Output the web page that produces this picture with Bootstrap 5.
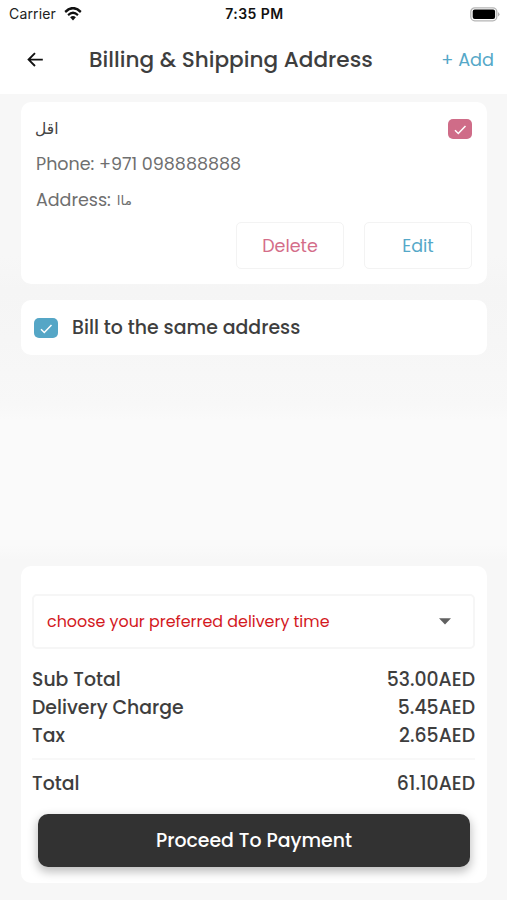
<!DOCTYPE html>
<html lang="en">
<head>
<meta charset="utf-8">
<meta name="viewport" content="width=device-width, initial-scale=1">
<title>Billing &amp; Shipping Address</title>
<link href="https://cdn.jsdelivr.net/npm/bootstrap@5.3.0/dist/css/bootstrap.min.css" rel="stylesheet">
<style>
  body{font-family:Poppins,Inter,"DejaVu Sans",sans-serif;color:#3e3e3e;overflow:hidden}
  .screen{height:900px;background:linear-gradient(#f7f7f7 0,#f7f7f7 255px,#f5f5f5 290px,#f6f6f6 340px,#f8f8f8 405px,#fafafa 420px,#fafafa 545px,#f7f7f7 560px,#f7f7f7 900px)}
  .status-bar{height:26px;padding:1px 7px 0 9px;font-family:Inter,"Liberation Sans",sans-serif;font-size:14px;line-height:26px;color:#222;display:grid;grid-template-columns:1fr auto 1fr}
  .carrier{letter-spacing:.15px}
  .clock{font-weight:600;letter-spacing:.45px;color:#111}
  .title-bar{height:68px;padding:0 13px 0 26px}
  .page-title{font-size:21.6px;font-weight:500;line-height:30px;margin:0 0 0 44px}
  .blue{color:#55a8c8}.pink{color:#d46d89}
  .add-link{font-size:17.7px;line-height:24px;margin-bottom:1px}
  .panel{background:#fff;border-radius:10px;margin:0 20px 0 21px}
  .address{margin-top:8px;height:182px;padding:9px 15px 0 14px;font-size:17.5px;color:#6f6f6f}
  .line{height:36px;padding-left:1px}
  .name-line{height:35px}
  .tick{width:24px;height:20px;border-radius:5px}
  .bg-pink{background:#cf6c88}.bg-blue{background:#55a6c6}
  .arabic{font-family:"DejaVu Sans",sans-serif}
  .arabic-name{font-size:15.5px;color:#444;padding-top:3px}
  .arabic-place{font-size:13.5px;margin-left:6px}
  .actions{gap:20px;margin-top:4px}
  .btn-box{width:108px;height:47px;border:1px solid #f3f3f3;border-radius:5px;background:#fff;font-size:17.5px;padding:2px 0 0}
  .same{margin-top:16px;height:55px;padding-left:13px;font-size:18.9px;font-weight:500;gap:14px}
  .same-text{padding-top:2px}
  .summary{margin-top:211px;height:317px;padding:28px 12px 0 11px;font-size:18.85px;font-weight:500}
  .chooser{height:55px;border:2px solid #f6f6f6;border-radius:5px;padding:0 22px 0 13px;font-size:15.9px;font-weight:400;color:#d3191e;margin-bottom:17px}
  .sum-row{height:28px;line-height:28px}
  .rule{height:2px;background:#f8f8f8;margin:8px 0 10px}
  .pay{margin:16px 5px 0 6px;height:53px;background:#323232;color:#fff;border-radius:10px;font-size:18.9px;font-weight:500;padding:2px 0 0;box-shadow:0 4px 10px 1px rgba(0,0,0,.25);border:0}
  svg{display:block}
</style>
</head>
<body>
<main class="screen d-flex flex-column">
  <header class="bg-white">
    <div class="status-bar align-items-center">
      <div class="d-flex align-items-center gap-1">
        <span class="carrier">Carrier</span>
        <svg class="ms-1" width="18" height="14" viewBox="0 0 20 14" preserveAspectRatio="none" fill="none" stroke="#111"><path d="M1.3 5Q10-2.6 18.7 5" stroke-width="2.6"/><path d="M4.5 8.2Q10 3.5 15.5 8.2" stroke-width="2.4"/><path d="M6.8 10.3Q10 7.6 13.2 10.3L10 13.5Z" fill="#111" stroke="none"/></svg>
      </div>
      <span class="clock">7:35 PM</span>
      <svg class="ms-auto" width="31" height="15" viewBox="0 0 31 15"><rect x="1.8" y=".8" width="26" height="13" rx="4" fill="#fff" stroke="#b5b5b5" stroke-width="1.3"/><rect x="3.7" y="2.6" width="22.4" height="9.4" rx="2" fill="#000"/><path d="M29 5q3 2.3 0 4.6z" fill="#b5b5b5"/></svg>
    </div>
    <div class="title-bar d-flex align-items-center">
      <svg width="19" height="16" viewBox="0 0 19 16" fill="none" stroke="#111" stroke-width="1.9"><path d="M16.8 7.6H3M9 1.2L2.6 7.6 9 14"/></svg>
      <h1 class="page-title">Billing &amp; Shipping Address</h1>
      <a class="add-link blue text-decoration-none ms-auto">+ Add</a>
    </div>
  </header>

  <section class="panel address">
    <div class="name-line d-flex align-items-center justify-content-between">
      <span class="arabic arabic-name" dir="rtl">اقل</span>
      <span class="tick bg-pink d-flex align-items-center justify-content-center"><svg width="14" height="12" viewBox="0 0 14 12" fill="none" stroke="#fff" stroke-width="1.5"><path d="M2 7.3l3.3 3.2L12.5 3"/></svg></span>
    </div>
    <div class="line d-flex align-items-center">Phone: +971 098888888</div>
    <div class="line d-flex align-items-center"><span>Address:</span><span class="arabic arabic-place" dir="rtl">ماا</span></div>
    <div class="actions d-flex justify-content-end">
      <button class="btn-box pink">Delete</button>
      <button class="btn-box blue">Edit</button>
    </div>
  </section>

  <section class="panel same d-flex align-items-center">
    <span class="tick bg-blue d-flex align-items-center justify-content-center"><svg width="14" height="12" viewBox="0 0 14 12" fill="none" stroke="#fff" stroke-width="1.5"><path d="M2 7.3l3.3 3.2L12.5 3"/></svg></span>
    <span class="same-text">Bill to the same address</span>
  </section>

  <section class="panel summary">
    <div class="chooser d-flex align-items-center justify-content-between">
      <span>choose your preferred delivery time</span>
      <svg width="12" height="7" viewBox="0 0 12 7"><path d="M0 .3h12L6 6.6z" fill="#606060"/></svg>
    </div>
    <div class="sum-row d-flex justify-content-between"><span>Sub Total</span><span>53.00AED</span></div>
    <div class="sum-row d-flex justify-content-between"><span>Delivery Charge</span><span>5.45AED</span></div>
    <div class="sum-row d-flex justify-content-between"><span>Tax</span><span>2.65AED</span></div>
    <div class="rule"></div>
    <div class="sum-row d-flex justify-content-between"><span>Total</span><span>61.10AED</span></div>
    <div class="d-grid"><button class="pay">Proceed To Payment</button></div>
  </section>
</main>
<script src="https://cdn.jsdelivr.net/npm/bootstrap@5.3.0/dist/js/bootstrap.bundle.min.js"></script>
</body>
</html>
